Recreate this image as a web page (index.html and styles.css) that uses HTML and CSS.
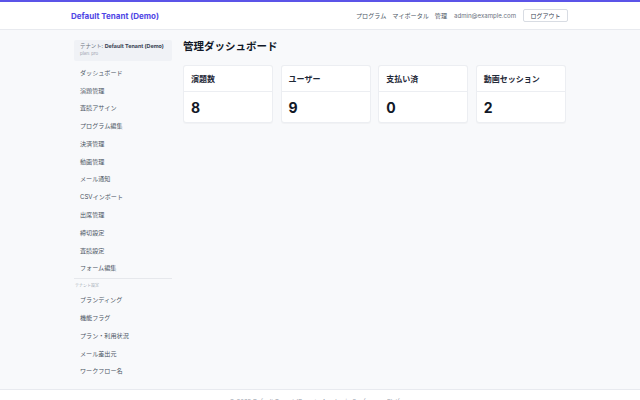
FILE: index.html
```html
<!DOCTYPE html>
<html lang="ja">
<head>
<meta charset="utf-8">
<title>管理ダッシュボード</title>
<link rel="stylesheet" href="styles.css">
</head>
<body>
<header class="topbar">
  <div class="topbar-inner">
    <a class="brand" href="#">Default Tenant (Demo)</a>
    <nav class="topnav">
      <a href="#">プログラム</a>
      <a href="#">マイポータル</a>
      <a href="#">管理</a>
      <span class="email">admin@example.com</span>
      <button class="logout">ログアウト</button>
    </nav>
  </div>
</header>
<div class="layout">
  <aside class="sidebar">
    <div class="tenant-box">
      <div class="tenant-name">テナント: <b>Default Tenant (Demo)</b></div>
      <div class="tenant-plan">plan: pro</div>
    </div>
    <ul class="menu">
      <li><a href="#">ダッシュボード</a></li>
      <li><a href="#">演題管理</a></li>
      <li><a href="#">査読アサイン</a></li>
      <li><a href="#">プログラム編集</a></li>
      <li><a href="#">決済管理</a></li>
      <li><a href="#">動画管理</a></li>
      <li><a href="#">メール通知</a></li>
      <li><a href="#">CSVインポート</a></li>
      <li><a href="#">出席管理</a></li>
      <li><a href="#">締切設定</a></li>
      <li><a href="#">査読設定</a></li>
      <li><a href="#">フォーム編集</a></li>
    </ul>
    <div class="menu-label">テナント設定</div>
    <ul class="menu">
      <li><a href="#">ブランディング</a></li>
      <li><a href="#">機能フラグ</a></li>
      <li><a href="#">プラン・利用状況</a></li>
      <li><a href="#">メール差出元</a></li>
      <li><a href="#">ワークフロー名</a></li>
    </ul>
  </aside>
  <main class="main">
    <h1 class="page-title">管理ダッシュボード</h1>
    <div class="stats">
      <div class="card"><div class="card-head">演題数</div><div class="card-body">8</div></div>
      <div class="card"><div class="card-head">ユーザー</div><div class="card-body">9</div></div>
      <div class="card"><div class="card-head">支払い済</div><div class="card-body">0</div></div>
      <div class="card"><div class="card-head">動画セッション</div><div class="card-body">2</div></div>
    </div>
  </main>
</div>
<footer class="footer">© 2025 Default Tenant (Demo) · Academic Conference Platform</footer>
</body>
</html>
```
FILE: styles.css
```css
* { box-sizing: border-box; }
html, body { margin: 0; padding: 0; }
body {
  background: #f8f9fb;
  font-family: "Inter", "Noto Sans CJK JP", sans-serif;
  color: #1f2937;
}
a { text-decoration: none; color: inherit; }

.topbar {
  background: #ffffff;
  border-top: 2px solid #5b54e8;
  border-bottom: 1px solid #e8eaef;
  height: 30px;
}
.topbar-inner {
  width: 498px;
  margin: 0 auto;
  height: 27px;
  display: flex;
  align-items: center;
  justify-content: space-between;
}
.brand {
  color: #4f46e5;
  font-weight: 700;
  font-size: 8px;
}
.topnav {
  display: flex;
  align-items: center;
  gap: 6px;
  font-size: 6.1px;
  color: #4b5563;
}
.topnav .email { color: #6b7280; font-size: 6.1px; margin-left: 1px; }
.logout {
  font-family: inherit;
  font-size: 6px;
  color: #374151;
  background: #fff;
  border: 1px solid #d8dce3;
  border-radius: 2px;
  height: 13px;
  padding: 0 6.5px;
  margin-left: 1px;
  margin-right: 1px;
  line-height: 11px;
}

.layout {
  width: 498px;
  margin: 0 auto;
  padding: 10px 3px 9px;
  display: flex;
  gap: 11px;
}
.sidebar { width: 98px; flex: none; }
.tenant-box {
  background: #f0f2f6;
  border-radius: 2px;
  height: 21px;
  padding: 3px 6px 0;
}
.tenant-name { font-size: 5.4px; line-height: 7px; color: #6b7280; }
.tenant-name b { color: #374151; font-weight: 700; }
.tenant-plan { font-size: 4.4px; line-height: 6px; color: #9ca3af; margin-top: 1px; }

.menu { list-style: none; margin: 0; padding: 0; }
.tenant-box + .menu { margin-top: 2.4px; }
.menu a {
  display: block;
  font-size: 6.1px;
  line-height: 9px;
  padding: 4.4px 6px;
  color: #4b5563;
}
.menu-label {
  border-top: 1px solid #e6e8ec;
  margin-top: 1px;
  padding: 4px 0 0 1px;
  font-size: 4px;
  line-height: 6px;
  color: #a3a9b3;
  margin-bottom: 2px;
}

.main { flex: 1; }
.page-title {
  margin: 0 0 11px;
  font-size: 10.5px;
  line-height: 14px;
  font-weight: 700;
  color: #111827;
}
.stats {
  display: grid;
  grid-template-columns: repeat(4, 1fr);
  gap: 7.3px;
}
.card {
  background: #fff;
  border: 1px solid #eceef2;
  border-radius: 3px;
  box-shadow: 0 0.5px 1px rgba(0,0,0,0.03);
}
.card-head {
  height: 26px;
  border-bottom: 1px solid #eceef2;
  padding: 0 7px;
  display: flex;
  align-items: center;
  font-size: 8px;
  font-weight: 700;
  color: #1f2937;
}
.card-body {
  height: 30px;
  padding: 0 7px;
  display: flex;
  align-items: center;
  font-size: 14px;
  font-weight: 700;
  color: #111827;
}

.footer {
  background: #fff;
  border-top: 1px solid #e8eaef;
  text-align: center;
  font-size: 6px;
  color: #9ca3af;
  padding: 8px 0 10px;
}
```
